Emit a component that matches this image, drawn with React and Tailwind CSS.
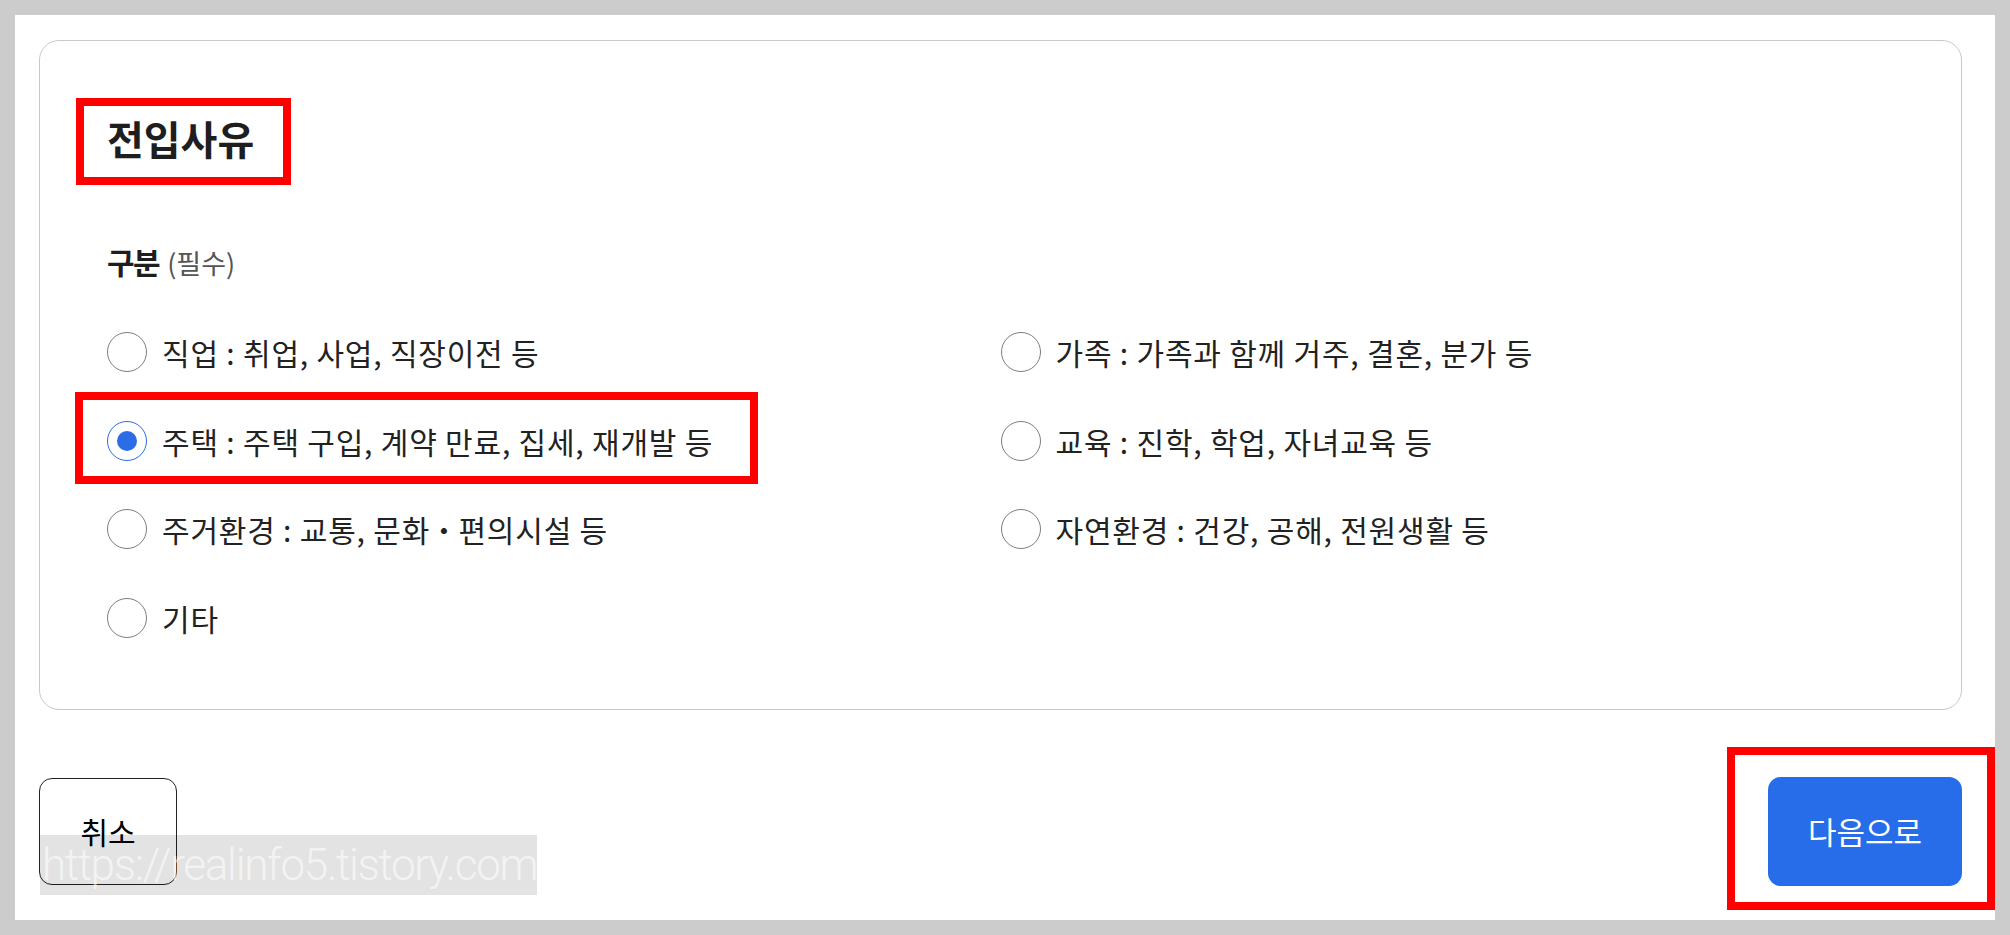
import React from 'react';

function Radio({ label, checked, mark }) {
  return (
    <div className="relative flex items-center h-[40px]">
      <span
        className={
          checked
            ? 'flex items-center justify-center w-[40px] h-[40px] rounded-full border border-[#2a6de6] bg-white shrink-0'
            : 'flex items-center justify-center w-[40px] h-[40px] rounded-full border border-[#7d7d7d] bg-white shrink-0'
        }
      >
        {checked && <span className="w-[20px] h-[20px] rounded-full bg-[#2a6de6]" />}
      </span>
      <span className="ml-[15px] text-[30px] leading-[40px] tracking-[0.8px] text-[#222222] whitespace-nowrap">{label}</span>
      {mark && (
        <span className="absolute left-[-32px] top-[-29px] w-[683px] h-[92px] border-[8px] border-[#ff0000] pointer-events-none" />
      )}
    </div>
  );
}

export default function App() {
  const items = [
    { label: '직업 : 취업, 사업, 직장이전 등' },
    { label: '가족 : 가족과 함께 거주, 결혼, 분가 등' },
    { label: '주택 : 주택 구입, 계약 만료, 집세, 재개발 등', checked: true, mark: true },
    { label: '교육 : 진학, 학업, 자녀교육 등' },
    {
      label: (
        <>
          주거환경 : 교통, 문화<span className="font-black">ㆍ</span>편의시설 등
        </>
      ),
    },
    { label: '자연환경 : 건강, 공해, 전원생활 등' },
    { label: '기타' },
  ];

  return (
    <div className="w-[2010px] h-[935px] bg-[#cccccc] p-[15px] font-['Noto_Sans_CJK_KR',sans-serif] overflow-hidden">
      <div className="h-full bg-white pt-[25px] pl-[24px] pr-[33px] flex flex-col">
        <section className="h-[670px] border border-[#c9c9c9] rounded-[20px] pt-[77px] px-[67px] shrink-0">
          <div className="relative w-fit">
            <h2 className="text-[40px] leading-[40px] font-bold tracking-[0px] text-[#1e1e1e]">전입사유</h2>
            <span className="absolute left-[-31px] top-[-20px] w-[215px] h-[87px] border-[8px] border-[#ff0000] pointer-events-none" />
          </div>

          <div className="mt-[88px] flex items-baseline h-[30px] leading-[30px]">
            <span className="text-[30px] font-bold tracking-[-1.5px] text-[#1e1e1e]">구분</span>
            <span className="ml-[8px] text-[27px] text-[#555555]">(필수)</span>
          </div>

          <div className="mt-[56px] grid grid-cols-2 gap-y-[48.67px]">
            {items.map((it, i) => (
              <Radio key={i} label={it.label} checked={it.checked} mark={it.mark} />
            ))}
          </div>
        </section>

        <div className="relative mt-[67px] flex items-center justify-between h-[109px]">
          <button className="w-[138px] h-[107px] border border-[#222222] rounded-[13px] bg-white text-[30px] text-black">
            취소
          </button>
          <div className="relative">
            <button className="w-[194px] h-[109px] rounded-[13px] bg-[#276de9] text-white text-[31px]">다음으로</button>
            <span className="absolute left-[-41px] top-[-30px] w-[268px] h-[163px] border-[8px] border-[#ff0000] pointer-events-none" />
          </div>
          <div className="absolute left-[1px] top-[58px] w-[497px] h-[60px] bg-black/[0.11] pointer-events-none">
            <span className="block pl-[2px] font-['Roboto',sans-serif] font-light text-[44px] leading-[60px] tracking-[-1.3px] text-white/60 whitespace-nowrap">
              https://realinfo5.tistory.com
            </span>
          </div>
        </div>
      </div>
    </div>
  );
}
